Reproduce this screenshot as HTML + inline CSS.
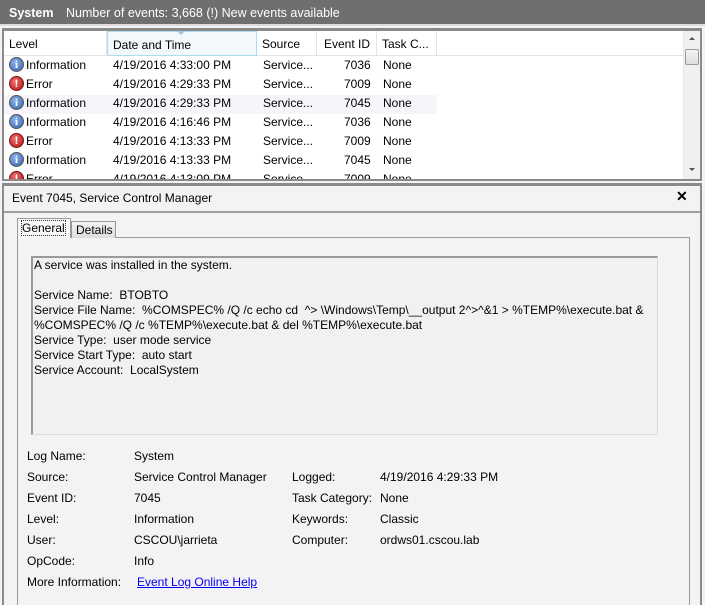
<!DOCTYPE html>
<html><head><style>
*{margin:0;padding:0;box-sizing:border-box}
html,body{width:705px;height:605px;overflow:hidden}
body{background:#f5f2f5;font-family:"Liberation Sans",sans-serif;font-size:12px;color:#000;position:relative}
.abs{position:absolute;white-space:nowrap}
#title{left:0;top:0;width:705px;height:26px;background:#6f6e70;border-bottom:2px solid #dcdcdc}
#title span{position:absolute;top:6px;color:#fff;font-size:12.5px}
#list{left:2px;top:28px;width:700px;height:153px;background:#fff;border:2px solid #8a8a8a;border-top:3px solid #8a8a8a;overflow:hidden}
.hdr{position:absolute;top:0;height:25px;border-right:1px solid #e4e4e4;border-bottom:1px solid #e4e4e4;padding:6px 0 0 5px}
.row{position:absolute;left:0;width:680px;height:19px}
.row span{position:absolute;top:1px}
.ic{width:15px;height:15px;border-radius:50%;position:absolute;left:5px;top:0px;color:#fff;font-weight:bold;font-size:11px;text-align:center;line-height:15px;font-family:"Liberation Serif",serif}
.info{background:radial-gradient(circle at 40% 35%,#8fb4e8,#2f5fb0);border:1px solid #555}
.err{background:radial-gradient(circle at 40% 35%,#f07070,#b01010);border:1px solid #7a1010;font-family:"Liberation Sans",sans-serif}
#detail{left:2px;top:183px;width:700px;height:422px;overflow:hidden;border-left:2px solid #8a8a8a;border-right:2px solid #8a8a8a;border-top:3px solid #8a8a8a}
.lbl{position:absolute;white-space:nowrap}
</style></head><body>
<div id="title" class="abs"><span style="left:9px;font-weight:bold">System</span><span style="left:66px">Number of events: 3,668 (!) New events available</span></div>
<div id="list" class="abs">
 <div class="hdr" style="left:0;width:103px">Level</div>
 <div class="hdr" style="left:103px;width:150px;background:#f3f8fc;border:1px solid #aedaf3">Date and Time</div>
 <div style="position:absolute;left:173px;top:0;width:0;height:0;border-left:4px solid transparent;border-right:4px solid transparent;border-top:4px solid #9fc4e4"></div>
 <div class="hdr" style="left:253px;width:60px">Source</div>
 <div class="hdr" style="left:313px;width:60px;text-align:right;padding-right:6px">Event ID</div>
 <div class="hdr" style="left:373px;width:60px">Task C...</div>
 <div class="hdr" style="left:433px;width:246px;border-right:none"></div>
 <div style="position:absolute;left:679px;top:0;width:17px;height:148px;background:#f0f0f0;border-left:1px solid #e6e6e6">
  <div style="position:absolute;left:5px;top:6px;border-left:3px solid transparent;border-right:3px solid transparent;border-bottom:3px solid #555"></div>
  <div style="position:absolute;left:1px;top:18px;width:14px;height:16px;background:linear-gradient(#f4f4f4,#ddd);border:1px solid #999;border-radius:2px"></div>
  <div style="position:absolute;left:5px;top:137px;border-left:3px solid transparent;border-right:3px solid transparent;border-top:3px solid #555"></div>
 </div>
 <div class="row" style="top:26px"><div class="ic info">i</div><span style="left:22px">Information</span><span style="left:109px">4/19/2016 4:33:00 PM</span><span style="left:259px">Service...</span><span style="left:340px">7036</span><span style="left:379px">None</span></div>
 <div class="row" style="top:45px"><div class="ic err">!</div><span style="left:22px">Error</span><span style="left:109px">4/19/2016 4:29:33 PM</span><span style="left:259px">Service...</span><span style="left:340px">7009</span><span style="left:379px">None</span></div>
 <div class="row" style="top:64px;background:#f7f5f9;width:433px"><div class="ic info">i</div><span style="left:22px">Information</span><span style="left:109px">4/19/2016 4:29:33 PM</span><span style="left:259px">Service...</span><span style="left:340px">7045</span><span style="left:379px">None</span></div>
 <div class="row" style="top:83px"><div class="ic info">i</div><span style="left:22px">Information</span><span style="left:109px">4/19/2016 4:16:46 PM</span><span style="left:259px">Service...</span><span style="left:340px">7036</span><span style="left:379px">None</span></div>
 <div class="row" style="top:102px"><div class="ic err">!</div><span style="left:22px">Error</span><span style="left:109px">4/19/2016 4:13:33 PM</span><span style="left:259px">Service...</span><span style="left:340px">7009</span><span style="left:379px">None</span></div>
 <div class="row" style="top:121px"><div class="ic info">i</div><span style="left:22px">Information</span><span style="left:109px">4/19/2016 4:13:33 PM</span><span style="left:259px">Service...</span><span style="left:340px">7045</span><span style="left:379px">None</span></div>
 <div class="row" style="top:140px"><div class="ic err">!</div><span style="left:22px">Error</span><span style="left:109px">4/19/2016 4:13:09 PM</span><span style="left:259px">Service...</span><span style="left:340px">7009</span><span style="left:379px">None</span></div>
</div>
<div id="detail" class="abs">
 <div class="lbl" style="left:8px;top:5px">Event 7045, Service Control Manager</div>
 <div class="lbl" style="left:672px;top:2px;font-weight:bold;font-size:14px">✕</div>
 <div style="position:absolute;left:0;top:25px;width:696px;height:2px;background:#a0a0a0"></div>
 <div style="position:absolute;left:13px;top:51px;width:673px;height:380px;border:1px solid #999;background:#f5f2f5"></div>
 <div style="position:absolute;left:13px;top:32px;width:54px;height:20px;border:1px solid #999;border-bottom:none;background:#f8f8f8;padding:2px 4px"><span style="outline:1px dotted #333">General</span></div>
 <div style="position:absolute;left:67px;top:35px;width:45px;height:17px;border:1px solid #999;border-bottom:none;background:linear-gradient(#f2f2f2,#ddd);padding:1px 4px">Details</div>
 <div style="position:absolute;left:27px;top:70px;width:627px;height:179px;background:#f3f0f3;border:1px solid #dcdcdc;border-left:2px solid #9a9a9a;border-top:2px solid #9a9a9a;padding:0 1px;line-height:15px;white-space:pre">A service was installed in the system.

Service Name:  BTOBTO
Service File Name:  %COMSPEC% /Q /c echo cd  ^&gt; \Windows\Temp\__output 2^&gt;^&amp;1 &gt; %TEMP%\execute.bat &amp;
%COMSPEC% /Q /c %TEMP%\execute.bat &amp; del %TEMP%\execute.bat
Service Type:  user mode service
Service Start Type:  auto start
Service Account:  LocalSystem</div>
 <div class="lbl" style="left:23px;top:263px">Log Name:</div><div class="lbl" style="left:130px;top:263px">System</div>
 <div class="lbl" style="left:23px;top:284px">Source:</div><div class="lbl" style="left:130px;top:284px">Service Control Manager</div>
 <div class="lbl" style="left:288px;top:284px">Logged:</div><div class="lbl" style="left:376px;top:284px">4/19/2016 4:29:33 PM</div>
 <div class="lbl" style="left:23px;top:305px">Event ID:</div><div class="lbl" style="left:130px;top:305px">7045</div>
 <div class="lbl" style="left:288px;top:305px">Task Category:</div><div class="lbl" style="left:376px;top:305px">None</div>
 <div class="lbl" style="left:23px;top:326px">Level:</div><div class="lbl" style="left:130px;top:326px">Information</div>
 <div class="lbl" style="left:288px;top:326px">Keywords:</div><div class="lbl" style="left:376px;top:326px">Classic</div>
 <div class="lbl" style="left:23px;top:347px">User:</div><div class="lbl" style="left:130px;top:347px">CSCOU\jarrieta</div>
 <div class="lbl" style="left:288px;top:347px">Computer:</div><div class="lbl" style="left:376px;top:347px">ordws01.cscou.lab</div>
 <div class="lbl" style="left:23px;top:368px">OpCode:</div><div class="lbl" style="left:130px;top:368px">Info</div>
 <div class="lbl" style="left:23px;top:389px">More Information:</div><div class="lbl" style="left:133px;top:389px;color:#0000ee;text-decoration:underline">Event Log Online Help</div>
</div>
</body></html>
